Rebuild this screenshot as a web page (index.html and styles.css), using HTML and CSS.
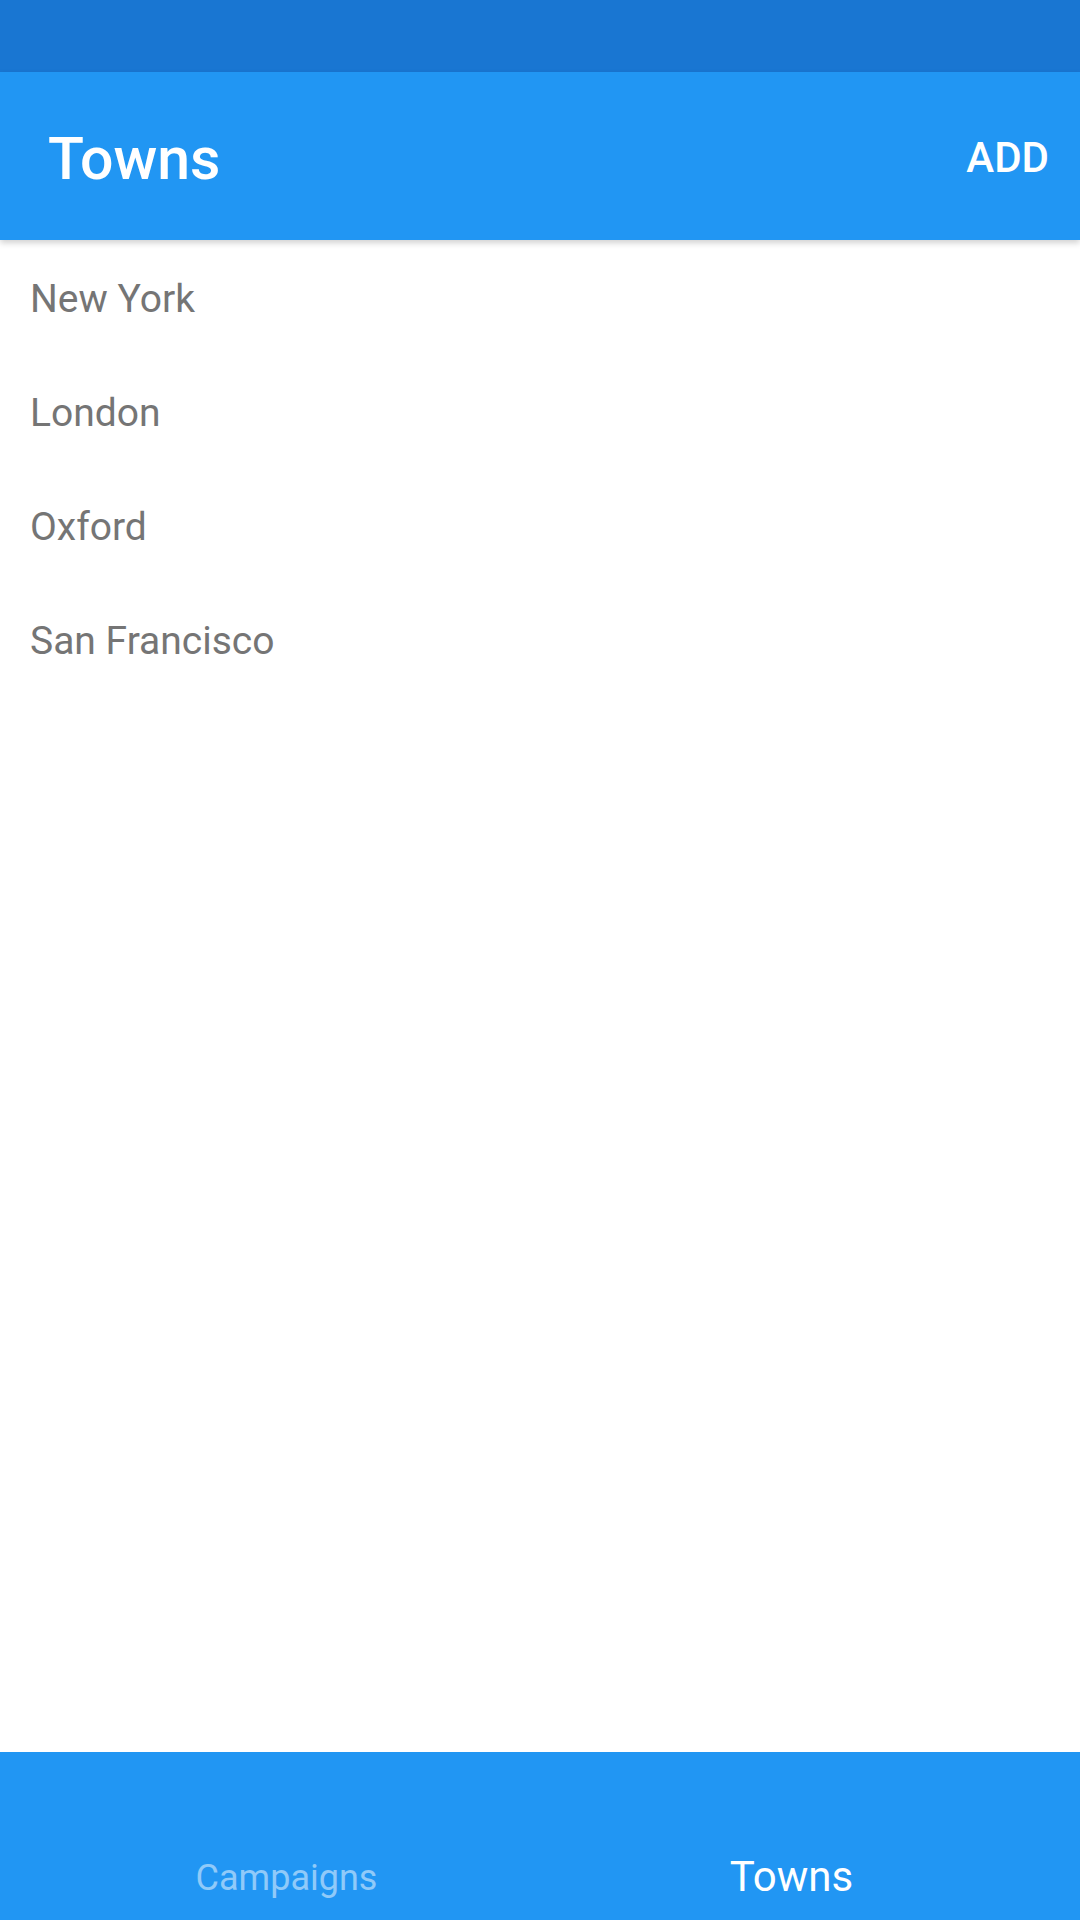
FILE: index.html
```html
<!DOCTYPE html>
<html>
<head>
<meta charset="utf-8">
<link rel="stylesheet" href="styles.css">
</head>
<body>
<div class="screen">
  <div class="statusbar"></div>
  <header class="appbar">
    <h1 class="title">Towns</h1>
    <span class="action">ADD</span>
  </header>
  <main class="list">
    <div class="row">New York</div>
    <div class="row">London</div>
    <div class="row">Oxford</div>
    <div class="row">San Francisco</div>
  </main>
  <nav class="tabbar">
    <div class="tab tab-left">Campaigns</div>
    <div class="tab tab-right active">Towns</div>
  </nav>
</div>
</body>
</html>
```
FILE: styles.css
```css
html, body {
  margin: 0;
  padding: 0;
}
body {
  font-family: Roboto, "Liberation Sans", sans-serif;
  background: #ffffff;
}
.screen {
  width: 1080px;
  height: 1920px;
  display: flex;
  flex-direction: column;
  overflow: hidden;
}
.statusbar {
  height: 72px;
  background: #1976D2;
  flex: none;
}
.appbar {
  height: 168px;
  background: #2196F3;
  flex: none;
  display: flex;
  align-items: center;
  justify-content: space-between;
  padding: 0 31px 0 48px;
  box-shadow: 0 3px 6px rgba(0,0,0,0.18);
  position: relative;
  z-index: 1;
}
.title {
  margin: 0;
  font-size: 59px;
  font-weight: 500;
  color: #ffffff;
  line-height: 1;
  padding-top: 4px;
}
.action {
  font-size: 42px;
  font-weight: 500;
  color: #ffffff;
  line-height: 1;
  padding-top: 4px;
}
.list {
  flex: 1;
  display: flex;
  flex-direction: column;
  padding-top: 2px;
}
.row {
  height: 114px;
  display: flex;
  align-items: center;
  padding-left: 30px;
  font-size: 39px;
  color: #757575;
  line-height: 1;
}
.tabbar {
  height: 168px;
  flex: none;
  background: #2196F3;
  display: grid;
  grid-template-columns: 1fr 1fr;
  align-items: end;
}
.tab {
  text-align: center;
  line-height: 1;
  min-width: 0;
}
.tab-left {
  font-size: 36px;
  color: rgba(255,255,255,0.5);
  padding-left: 33px;
  padding-bottom: 24px;
}
.tab-right {
  font-size: 42px;
  color: #ffffff;
  padding-right: 37px;
  padding-bottom: 22px;
}
```
